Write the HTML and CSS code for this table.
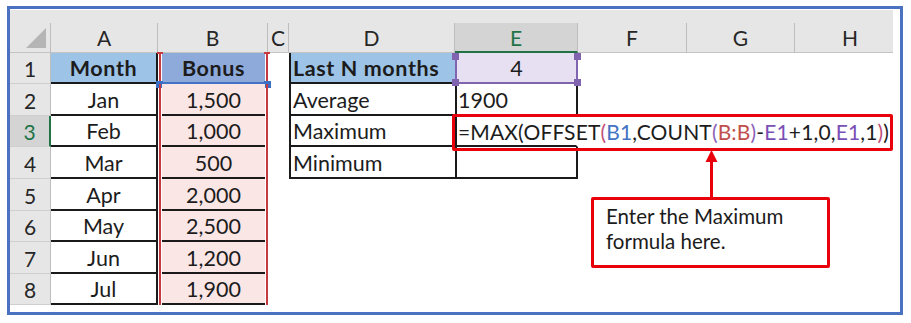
FILE: index.html
```html
<!DOCTYPE html>
<html>
<head>
<meta charset="utf-8">
<link rel="stylesheet" href="styles.css">
</head>
<body>
<div class="frame">
  <div class="sheet">
    <div class="band"></div>
    <div class="grid">
      <div class="ch corner"><span class="tri"></span></div>
      <div class="ch">A</div>
      <div class="ch">B</div>
      <div class="ch">C</div>
      <div class="ch">D</div>
      <div class="ch sel">E</div>
      <div class="ch">F</div>
      <div class="ch">G</div>
      <div class="ch last">H</div>

      <div class="rh">1</div>
      <div class="ca hdr-a bold">Month</div>
      <div class="cb b1"><div class="in bold">Bonus</div><span class="h hl"></span><span class="h hr"></span></div>
      <div class="cc"></div>
      <div class="cd hdr-d bold">Last N months</div>
      <div class="ce e1">4<span class="p ptl"></span><span class="p ptr"></span><span class="p pbl"></span><span class="p pbr"></span></div>
      <div></div><div></div><div></div>

      <div class="rh">2</div>
      <div class="ca">Jan</div>
      <div class="cb"><div class="in">1,500</div></div>
      <div class="cc"></div>
      <div class="cd">Average</div>
      <div class="ce left">1900</div>
      <div></div><div></div><div></div>

      <div class="rh selr">3</div>
      <div class="ca">Feb</div>
      <div class="cb"><div class="in">1,000</div></div>
      <div class="cc"></div>
      <div class="cd">Maximum</div>
      <div class="ce left formula">=MAX(OFFSET<span class="k1">(</span><span class="r1">B1</span>,COUNT<span class="k2">(</span><span class="r2">B:B</span><span class="k2">)</span>-<span class="r3">E1</span>+1,0,<span class="r3">E1</span>,1<span class="k1">)</span>)</div>
      <div></div><div></div><div></div>

      <div class="rh">4</div>
      <div class="ca">Mar</div>
      <div class="cb"><div class="in">500</div></div>
      <div class="cc"></div>
      <div class="cd">Minimum</div>
      <div class="ce"></div>
      <div></div><div></div><div></div>

      <div class="rh">5</div>
      <div class="ca">Apr</div>
      <div class="cb"><div class="in">2,000</div></div>
      <div class="cc"></div><div></div><div></div><div></div><div></div><div></div>

      <div class="rh">6</div>
      <div class="ca">May</div>
      <div class="cb"><div class="in">2,500</div></div>
      <div class="cc"></div><div></div><div></div><div></div><div></div><div></div>

      <div class="rh">7</div>
      <div class="ca">Jun</div>
      <div class="cb"><div class="in">1,200</div></div>
      <div class="cc"></div><div></div><div></div><div></div><div></div><div></div>

      <div class="rh">8</div>
      <div class="ca">Jul</div>
      <div class="cb"><div class="in">1,900</div></div>
      <div class="cc"></div><div></div><div></div><div></div><div></div><div></div>
    </div>
  </div>

  <div class="fbox"></div>
  <svg class="arrow" width="13" height="47" viewBox="0 0 13 47">
    <polygon points="6.5,0 0.5,12 12.5,12" fill="#e8000b"/>
    <rect x="5" y="10" width="3" height="37" fill="#e8000b"/>
  </svg>
  <div class="callout">Enter the Maximum<br>formula here.</div>
</div>
</body>
</html>
```

FILE: styles.css
```css
html, body {
  margin: 0;
  padding: 0;
  background: #ffffff;
}

body {
  font-family: Lato, "Liberation Sans", sans-serif;
  color: #1c1c1c;
}

.frame {
  position: relative;
  box-sizing: border-box;
  width: 896px;
  height: 309px;
  margin: 6px 0 0 7px;
  border: 3px solid #4a72c1;
  padding-top: 1px;
  background: #ffffff;
}

.sheet {
  width: 883px;
  overflow: hidden;
}

.band {
  height: 13px;
  background: #e6e6e6;
}

.grid {
  display: grid;
  grid-template-columns: 41px 107px 110px 21px 166px 123px 109px 108px 110px;
  grid-template-rows: 30px 31px 32px 31px 32px 32px 31px 32px 31px;
  font-size: 21.5px;
}

.grid > div {
  box-sizing: border-box;
  min-width: 0;
}

.ch {
  background: #e6e6e6;
  border-right: 1px solid #bdbdbd;
  border-bottom: 1px solid #c4c4c4;
  display: flex;
  align-items: center;
  justify-content: center;
  color: #262626;
  font-size: 21px;
}

.ch.last {
  border-right: none;
}

.ch.sel {
  background: #d4d4d4;
  color: #217346;
  border-bottom: 2px solid #217346;
}

.corner {
  justify-content: flex-end;
  padding-right: 4px;
}

.tri {
  width: 0;
  height: 0;
  border-left: 20px solid transparent;
  border-bottom: 20px solid #b5b5b5;
}

.rh {
  background: #e6e6e6;
  border-right: 1px solid #bdbdbd;
  border-bottom: 1px solid #cfcfcf;
  display: flex;
  align-items: center;
  justify-content: center;
  color: #262626;
  font-size: 21px;
  padding-top: 1px;
}

.rh.selr {
  background: #d4d4d4;
  color: #217346;
  border-right: 2px solid #217346;
}

.ca {
  border-right: 2px solid #1a1a1a;
  border-bottom: 2px solid #1a1a1a;
  display: flex;
  align-items: center;
  justify-content: center;
  padding-top: 1px;
}

.hdr-a {
  background: #9dc3e6;
}

.bold {
  font-weight: 700;
  letter-spacing: 0.6px;
}

.cb {
  margin-left: 1px;
  border-left: 2px solid #c53a40;
  border-right: 2px solid #c53a40;
  position: relative;
}

.cb .in {
  height: 100%;
  margin: 0 1px;
  box-sizing: border-box;
  background: #fbe6e6;
  border-bottom: 2px solid #1a1a1a;
  display: flex;
  align-items: center;
  justify-content: center;
  padding-top: 1px;
}

.b1 .in {
  background: #8eaadb;
  border-bottom: 2px solid #4472c4;
}

.b1::before,
.b1::after {
  content: "";
  position: absolute;
  top: -1px;
  width: 6px;
  height: 2px;
  background: #c53a40;
}

.b1::before {
  left: -4px;
}

.b1::after {
  right: -4px;
}

.h {
  position: absolute;
  width: 7px;
  height: 7px;
  background: #3a6fc6;
  bottom: -4px;
}

.hl {
  left: -5px;
}

.hr {
  right: -5px;
}

.cd {
  border-left: 2px solid #1a1a1a;
  border-bottom: 2px solid #1a1a1a;
  display: flex;
  align-items: center;
  padding-left: 2px;
  padding-top: 1px;
  white-space: nowrap;
}

.hdr-d {
  background: #9dc3e6;
}

.ce {
  border-left: 2px solid #1a1a1a;
  border-right: 2px solid #1a1a1a;
  border-bottom: 2px solid #1a1a1a;
  display: flex;
  align-items: center;
  justify-content: center;
  padding-top: 1px;
  white-space: nowrap;
}

.ce.left {
  justify-content: flex-start;
  padding-left: 1px;
}

.e1 {
  position: relative;
  background: #e6e0f2;
  border-left-color: #8064b0;
  border-right-color: #8064b0;
  border-bottom-color: #8064b0;
}

.p {
  position: absolute;
  width: 7px;
  height: 7px;
  background: #8064b0;
}

.ptl { left: -5px; top: 0; }
.ptr { right: -5px; top: 0; }
.pbl { left: -5px; bottom: -4px; }
.pbr { right: -5px; bottom: -4px; }

.formula {
  overflow: visible;
  position: relative;
  z-index: 1;
  font-size: 21px;
  letter-spacing: 0.15px;
  border-right-color: transparent;
}

.k1 { color: #c0507a; }
.k2 { color: #8a63b8; }
.r1 { color: #4472c4; }
.r2 { color: #c0504d; }
.r3 { color: #7a4fb5; }

.fbox {
  position: absolute;
  left: 442px;
  top: 105px;
  width: 441px;
  height: 37px;
  box-sizing: border-box;
  border: 3px solid #e8000b;
  border-radius: 2px;
  z-index: 2;
}

.arrow {
  position: absolute;
  left: 695px;
  top: 141px;
  z-index: 2;
}

.callout {
  position: absolute;
  left: 581px;
  top: 188px;
  width: 239px;
  height: 71px;
  box-sizing: border-box;
  border: 3px solid #e8000b;
  border-radius: 2px;
  background: #ffffff;
  padding: 4px 0 0 12px;
  font-size: 20.5px;
  line-height: 25px;
  color: #1c1c1c;
  z-index: 2;
}
```
